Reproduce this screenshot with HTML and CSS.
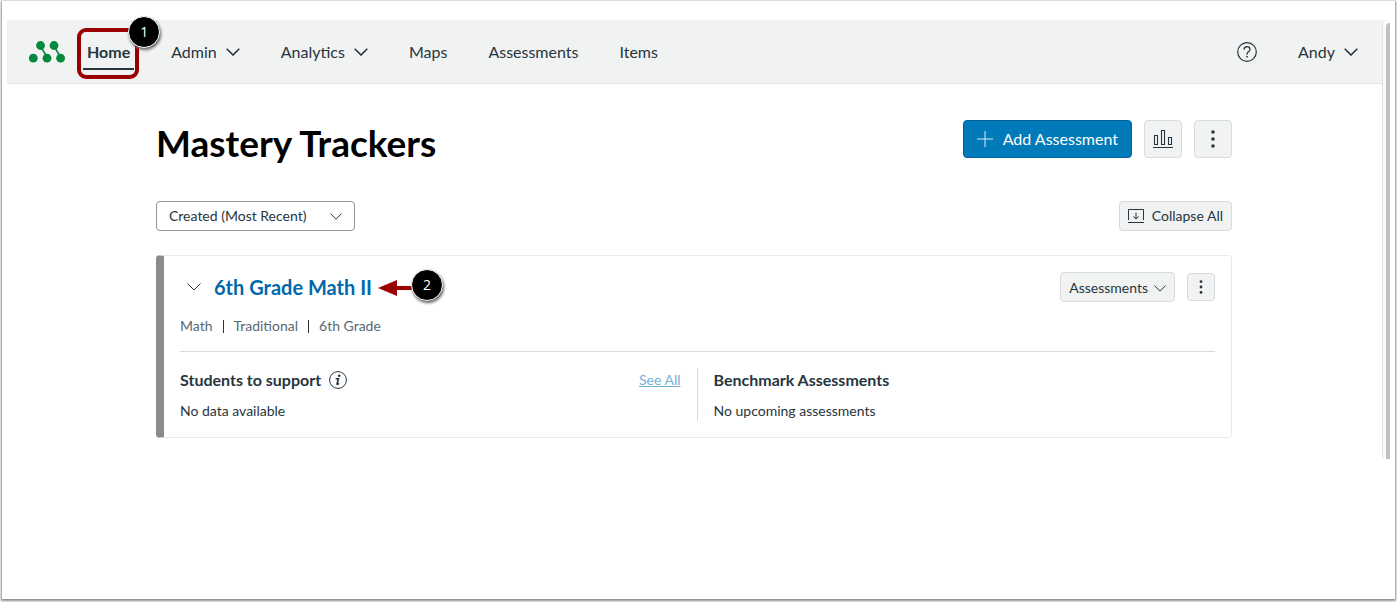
FILE: index.html
```html
<!DOCTYPE html>
<html lang="en">

<head>
  <meta charset="UTF-8">
  <meta name="viewport" content="width=device-width, initial-scale=1.0">
  <title>Mastery Trackers</title>
  <link rel="stylesheet" href="styles.css">
</head>

<body>
  <div class="frame">
    <div class="app">
      <div class="page">

        <!-- top navigation -->
        <header class="topbar">
          <a class="logo" href="#" aria-label="Mastery">
            <svg width="38" height="24" viewBox="0 0 38 24" fill="#03893d" stroke="#03893d">
              <path d="M12.5 6l7 12M26 6l7 12" fill="none" stroke-width="1.6" />
              <g stroke="none">
                <circle cx="12.5" cy="5.5" r="4.4" />
                <circle cx="26" cy="5.5" r="4.4" />
                <circle cx="5.3" cy="18.2" r="4.4" />
                <circle cx="19" cy="18.2" r="4.4" />
                <circle cx="32.6" cy="18.2" r="4.4" />
              </g>
            </svg>
          </a>
          <nav class="nav">
            <div class="navHome">
              <a class="navLink active" href="#">Home</a>
              <span class="highlight"></span>
              <span class="step stepHome">1</span>
            </div>
            <button class="navLink" type="button">Admin
              <svg width="14" height="8" viewBox="0 0 14 8"><path class="chevron" d="M.7.7L7 7 13.3.7" /></svg>
            </button>
            <button class="navLink" type="button">Analytics
              <svg width="14" height="8" viewBox="0 0 14 8"><path class="chevron" d="M.7.7L7 7 13.3.7" /></svg>
            </button>
            <a class="navLink" href="#">Maps</a>
            <a class="navLink" href="#">Assessments</a>
            <a class="navLink" href="#">Items</a>
          </nav>
          <div class="userArea">
            <button class="navLink" type="button" aria-label="Help">
              <svg width="20" height="20" viewBox="0 0 20 20" fill="none" stroke="#273540" stroke-width="1.2">
                <circle cx="10" cy="10" r="9.3" />
                <path d="M7 7.8C7 5.8 8.2 4.7 10 4.7s3 1.1 3 2.7c0 2.3-3 2.4-3 4.6v.8" />
                <circle cx="10" cy="14.7" r=".9" fill="#273540" stroke="none" />
              </svg>
            </button>
            <button class="navLink" type="button">Andy
              <svg width="14" height="8" viewBox="0 0 14 8"><path class="chevron" d="M.7.7L7 7 13.3.7" /></svg>
            </button>
          </div>
        </header>

        <main class="content">
          <div class="titleRow">
            <h1 class="title">Mastery Trackers</h1>
            <div class="actions">
              <button class="btn btnPrimary" type="button">
                <svg width="16" height="16" viewBox="0 0 16 16"><path d="M8 0v16M0 8h16" stroke="#fff" stroke-width="1" opacity=".85" /></svg>
                Add Assessment
              </button>
              <button class="btn btnIcon" type="button" aria-label="Reports">
                <svg width="20" height="18" viewBox="0 0 20 18" fill="none" stroke="#273540">
                  <path d="M1.5 5.5h3v9h-3zM8.5.5h3v14h-3zM15.5 7.5h3v7h-3z" stroke-width="1.1" />
                  <path d="M0 17.5h20" />
                </svg>
              </button>
              <button class="btn btnIcon" type="button" aria-label="More options">
                <svg width="4" height="18" viewBox="0 0 4 18" fill="#273540">
                  <circle cx="2" cy="2" r="1.8" />
                  <circle cx="2" cy="9" r="1.8" />
                  <circle cx="2" cy="16" r="1.8" />
                </svg>
              </button>
            </div>
          </div>

          <div class="filterRow">
            <div class="selectWrap">
              <select class="sortSelect" aria-label="Sort by">
                <option>Created (Most Recent)</option>
              </select>
              <svg class="selectArrow" width="12" height="7" viewBox="0 0 12 7"><path class="chevron thin" d="M.4.5L6 6.2 11.6.5" /></svg>
            </div>
            <button class="btn btnSmall" type="button">
              <svg width="16" height="14" viewBox="0 0 16 14" fill="none" stroke="#273540">
                <path d="M.5 11V.5h15V11M0 13.5h16" />
                <path d="M8 3.5v6.5M5.3 7.4L8 10l2.7-2.6" />
              </svg>
              Collapse All
            </button>
          </div>

          <!-- tracker -->
          <section class="card">
            <div class="cardHead">
              <button class="toggle" type="button" aria-label="Collapse tracker">
                <svg width="14" height="8" viewBox="0 0 14 8"><path class="chevron thin" d="M.5.5L7 7 13.5.5" /></svg>
              </button>
              <div class="cardName">
                <h2 class="cardTitle"><a href="#">6th Grade Math II</a></h2>
                <div class="callout">
                  <svg width="36" height="16" viewBox="0 0 36 16" fill="#990000"><path d="M0 8L19 0v6h17v4H19v6z" /></svg>
                  <span class="step stepCard">2</span>
                </div>
              </div>
              <div class="actions">
                <button class="btn btnSmall btnMenu" type="button">Assessments
                  <svg width="12" height="7" viewBox="0 0 12 7"><path class="chevron thin" d="M.4.5L6 6.2 11.6.5" /></svg>
                </button>
                <button class="btn btnDots" type="button" aria-label="Tracker options">
                  <svg width="4" height="14" viewBox="0 0 4 14" fill="#273540">
                    <circle cx="2" cy="1.6" r="1.4" />
                    <circle cx="2" cy="7" r="1.4" />
                    <circle cx="2" cy="12.4" r="1.4" />
                  </svg>
                </button>
              </div>
            </div>

            <ul class="meta">
              <li>Math</li>
              <li>Traditional</li>
              <li>6th Grade</li>
            </ul>

            <div class="columns">
              <div class="column">
                <div class="columnHead">
                  <h3>Students to support</h3>
                  <button class="info" type="button" aria-label="About students to support">
                    <svg width="18" height="18" viewBox="0 0 18 18">
                      <circle cx="9" cy="9" r="8.4" fill="none" stroke="#273540" />
                      <circle cx="10.2" cy="4.8" r="1.3" fill="#273540" />
                      <path d="M6.6 7.7h2.9L8 13c-.1.6.6.5 2-.7" fill="none" stroke="#273540" stroke-width="1.6" />
                    </svg>
                  </button>
                  <a class="seeAll" href="#">See All</a>
                </div>
                <p>No data available</p>
              </div>
              <div class="column">
                <div class="columnHead">
                  <h3>Benchmark Assessments</h3>
                </div>
                <p>No upcoming assessments</p>
              </div>
            </div>
          </section>
        </main>
      </div>

      <div class="scrollTrack">
        <div class="scrollThumb"></div>
      </div>
    </div>
  </div>
</body>

</html>
```

FILE: styles.css
```css
* {
  box-sizing: border-box;
}

body {
  margin: 0;
  padding: 1px 2px 3px;
  min-height: 100vh;
  display: flex;
  background-color: #fff;
  color: #273540;
  font-family: Lato, "Liberation Sans", sans-serif;
  font-size: 14px;
  line-height: 20px;
}

h1, h2, h3, p, ul {
  margin: 0;
  padding: 0;
}

button, select {
  font: inherit;
  color: inherit;
  cursor: pointer;
}

button {
  padding: 0;
  border: 0;
  background: none;
}

a {
  color: inherit;
  text-decoration: none;
}

svg {
  display: block;
  flex: none;
}

.frame {
  flex: 1;
  padding: 19px 5px;
  box-shadow: 0 1px 2px 1px #8c8c8c;
}

.app {
  display: flex;
}

.page {
  flex: 1;
}

.chevron {
  fill: none;
  stroke: #273540;
  stroke-width: 1.6;
}

.thin {
  stroke-width: 1;
}

/* top navigation */
.topbar {
  display: flex;
  align-items: center;
  height: 64px;
  padding: 0 24px 0 21px;
  background-color: #f1f3f3;
  border-bottom: 1px solid #e3e6e8;
}

.logo {
  margin-right: 17px;
}

.nav, .userArea {
  display: flex;
  align-items: center;
  gap: 41px;
}

.userArea {
  margin-left: auto;
}

.navLink {
  display: flex;
  align-items: center;
  gap: 9px;
  font-size: 16px;
  line-height: 24px;
}

.navHome {
  position: relative;
  margin-right: -4px;
}

.active {
  padding: 6px 4px 4px;
  border-bottom: 2px solid #273540;
  font-weight: 700;
}

/* step callouts */
.highlight {
  position: absolute;
  inset: -6px -5px -9px -6px;
  border: 4px solid #990000;
  border-radius: 9px;
}

.step {
  position: absolute;
  width: 32px;
  height: 32px;
  border: 1px solid #fff;
  border-radius: 50%;
  background-color: #000;
  box-shadow: 1px 2px 3px #666;
  color: #fff;
  font-family: "Open Sans", sans-serif;
  font-size: 14px;
  line-height: 30px;
  text-align: center;
}

.stepHome {
  top: -18px;
  right: -26px;
}

.callout {
  position: absolute;
  left: 100%;
  top: 7px;
  margin-left: 6px;
}

.stepCard {
  left: 33px;
  top: -11px;
}

/* content */
.content {
  max-width: 1077px;
  margin: 0 auto;
  padding: 36px 1px 21px 0;
}

.titleRow, .filterRow {
  display: flex;
  justify-content: space-between;
}

.title {
  color: #000;
  font-size: 37px;
  line-height: 46px;
  font-weight: 700;
}

.actions {
  display: flex;
  align-items: center;
  align-self: flex-start;
  gap: 12px;
}

.btn {
  display: flex;
  align-items: center;
  justify-content: center;
  border: 1px solid #d7dade;
  border-radius: 4px;
  background-color: #f1f3f3;
}

.btnPrimary {
  gap: 10px;
  height: 38px;
  padding: 0 13px;
  border-color: #00629b;
  background-color: #007ab8;
  color: #fff;
  font-size: 16px;
}

.btnIcon {
  width: 38px;
  height: 38px;
}

.btnSmall {
  gap: 8px;
  height: 30px;
  padding: 0 8px;
}

.btnMenu {
  gap: 6px;
  padding-top: 2px;
}

.btnDots {
  width: 28px;
  height: 28px;
}

.filterRow {
  margin: 35px 0 24px;
}

.selectWrap {
  position: relative;
}

.sortSelect {
  appearance: none;
  width: 199px;
  height: 30px;
  padding: 0 32px 0 12px;
  border: 1px solid #8d959f;
  border-radius: 4px;
  background-color: #fff;
}

.selectArrow {
  position: absolute;
  right: 13px;
  top: 12px;
  pointer-events: none;
}

/* tracker card */
.card {
  padding: 16px;
  border: 1px solid #e8eaec;
  border-left: 8px solid #8b8b8b;
  border-radius: 4px;
}

.cardHead {
  display: flex;
  align-items: center;
  height: 30px;
}

.cardHead .actions {
  align-self: center;
  margin-left: auto;
}

.toggle {
  padding: 8px 13px 8px 7px;
}

.cardName {
  position: relative;
}

.cardTitle {
  color: #0068aa;
  font-size: 20px;
  line-height: 28px;
  font-weight: 700;
}

.meta {
  display: flex;
  gap: 10px;
  margin: 14px 0 15px;
  color: #586874;
  list-style: none;
}

.meta li {
  display: flex;
  align-items: center;
  gap: 10px;
}

.meta li + li::before {
  content: "";
  width: 1px;
  height: 13px;
  background-color: #273540;
}

.columns {
  display: grid;
  grid-template-columns: 1fr 1fr;
  padding-top: 16px;
  border-top: 1px solid #d7dade;
}

.column:first-child {
  padding-right: 16px;
  border-right: 1px solid #d7dade;
}

.column + .column {
  padding-left: 16px;
}

.columnHead {
  display: flex;
  align-items: center;
  gap: 8px;
  margin-bottom: 9px;
}

.columnHead h3 {
  font-size: 16px;
  line-height: 24px;
  font-weight: 700;
}

.seeAll {
  margin-left: auto;
  color: #74b3d8;
  text-decoration: underline;
}

/* scrollbar strip */
.scrollTrack {
  width: 8px;
  padding: 3px 0 0 3px;
  border-left: 1px solid #e3e3e3;
  background-color: #fafafa;
}

.scrollThumb {
  height: 100%;
  border-radius: 4px 0 0 0;
  background-color: #c1c1c1;
}
```
